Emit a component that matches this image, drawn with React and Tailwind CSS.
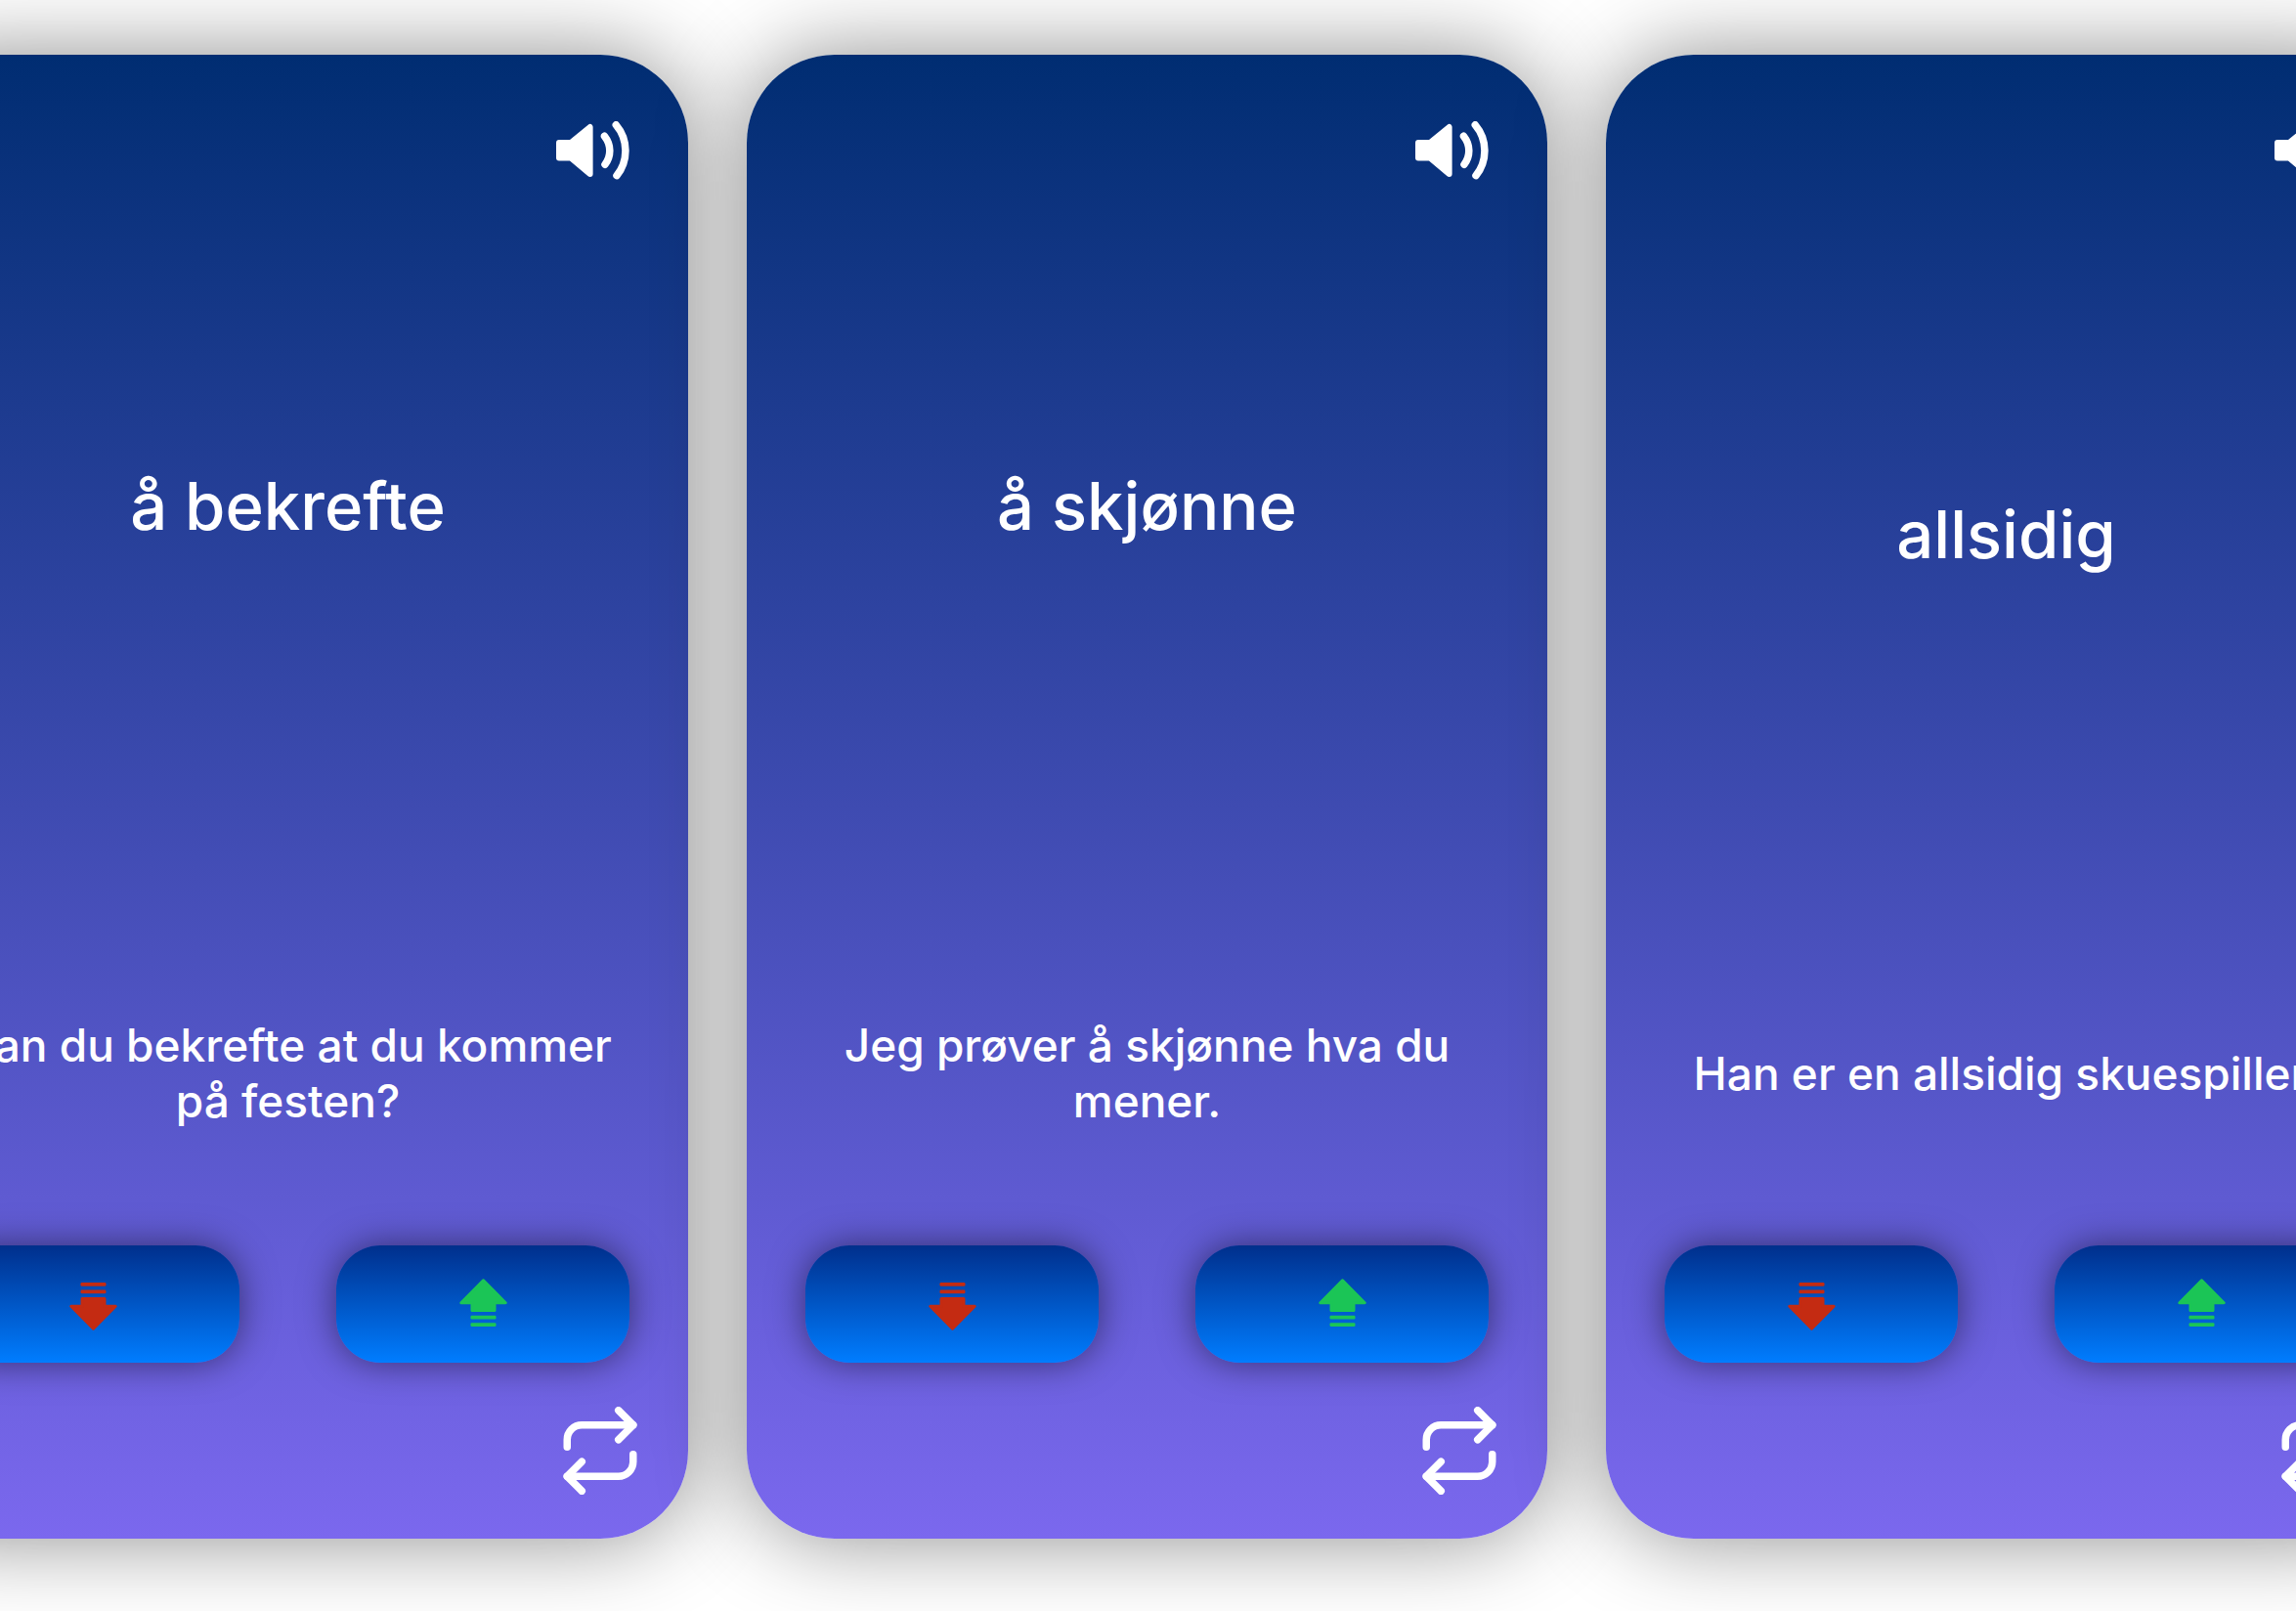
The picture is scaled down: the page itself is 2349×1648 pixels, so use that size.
const cards = [
  { word: "å bekrefte", sentence: "Kan du bekrefte at du kommer på festen?" },
  { word: "å skjønne", sentence: "Jeg prøver å skjønne hva du mener." },
  { word: "allsidig", sentence: "Han er en allsidig skuespiller." },
];

function SpeakerIcon() {
  return (
    <svg viewBox="0 0 75 60" className="h-[60px] w-[75px]" fill="none" aria-hidden="true">
      <path
        d="M3 22H15L34.6 6V54L15 37.5H3Z"
        fill="currentColor"
        stroke="currentColor"
        strokeWidth="6"
        strokeLinejoin="round"
      />
      <path
        d="M49.5 15.3C56.4 24 56.6 35.6 50 44.2M61.3 3.8C74 18.8 74 40.6 62 55.6"
        stroke="currentColor"
        strokeWidth="7.5"
        strokeLinecap="round"
      />
    </svg>
  );
}

function FlipIcon() {
  return (
    <svg
      viewBox="0 0 24 24"
      className="size-[90px]"
      fill="none"
      stroke="currentColor"
      strokeWidth="2"
      strokeLinecap="round"
      strokeLinejoin="round"
      aria-hidden="true"
    >
      <polyline points="17 1 21 5 17 9" />
      <path d="M3 11V9a4 4 0 0 1 4-4h14" />
      <polyline points="7 23 3 19 7 15" />
      <path d="M21 13v2a4 4 0 0 1-4 4H3" />
    </svg>
  );
}

function ArrowIcon({ className }) {
  return (
    <svg viewBox="0 0 53 53" className={className} fill="currentColor" aria-hidden="true">
      <path
        d="M26.5 1.8L49.2 24.8H38V32.5H15V24.8H3.8Z"
        stroke="currentColor"
        strokeWidth="3"
        strokeLinejoin="round"
      />
      <rect x="13.5" y="37.7" width="26" height="3.8" rx="1.2" />
      <rect x="13.5" y="45.2" width="26" height="3.8" rx="1.2" />
    </svg>
  );
}

function VoteButton({ label, children }) {
  return (
    <button
      type="button"
      aria-label={label}
      className="flex h-[120px] w-[300px] items-center justify-center rounded-[45px] bg-linear-to-b/srgb from-[#002f8c] to-[#007dff] shadow-[0_0_36px_rgba(0,0,0,0.5)]"
    >
      {children}
    </button>
  );
}

function Card({ word, sentence }) {
  return (
    <article className="flex flex-col rounded-[90px] bg-linear-to-b/srgb from-[#002d72] to-[#7b68ee] text-white shadow-[0_0_90px_rgba(0,0,0,0.45)]">
      <header className="flex h-[300px] items-start justify-end px-[60px] pt-[68px]">
        <button type="button" aria-label="Spill av uttale">
          <SpeakerIcon />
        </button>
      </header>
      <div className="flex flex-1 flex-col items-center justify-center gap-[480px] px-[60px] text-center font-medium">
        <h2 className="text-[67px] leading-[86px]">{word}</h2>
        <p className="text-[46px] leading-[57px]">{sentence}</p>
      </div>
      <footer className="flex h-[300px] flex-col justify-between pb-[45px]">
        <div className="flex justify-between px-[60px]">
          <VoteButton label="Kan ikke">
            <ArrowIcon className="size-[53px] rotate-180 text-[#c42b12]" />
          </VoteButton>
          <VoteButton label="Kan">
            <ArrowIcon className="size-[53px] text-[#1bc556]" />
          </VoteButton>
        </div>
        <button type="button" aria-label="Snu kortet" className="mr-[45px] self-end">
          <FlipIcon />
        </button>
      </footer>
    </article>
  );
}

export default function App() {
  return (
    <main className="flex min-h-screen flex-col overflow-hidden bg-white pt-14 pb-[74px] font-['Inter',sans-serif]">
      <div className="-mr-[113px] -ml-[115px] grid flex-1 grid-cols-3 gap-[60px]">
        {cards.map((card) => (
          <Card key={card.word} {...card} />
        ))}
      </div>
    </main>
  );
}
